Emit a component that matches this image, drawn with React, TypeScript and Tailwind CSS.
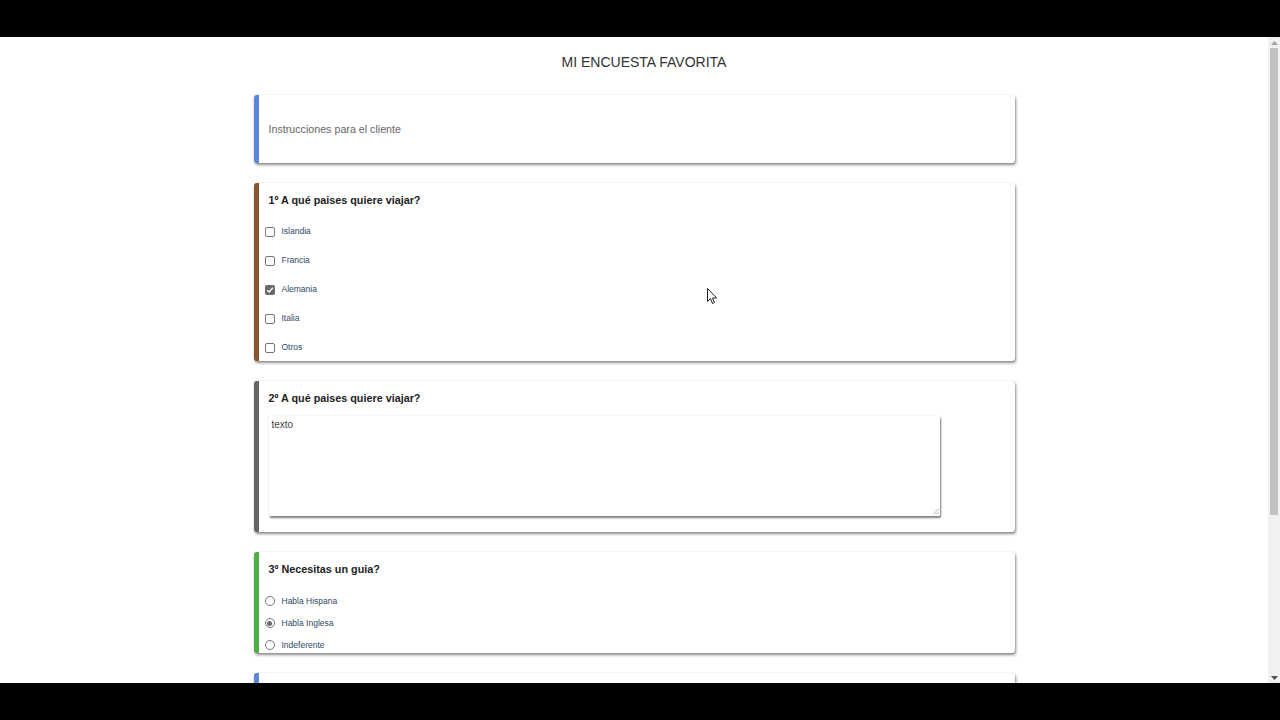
import React from "react";

type Option = { label: string; checked?: boolean };

const paises: Option[] = [
  { label: "Islandia" },
  { label: "Francia" },
  { label: "Alemania", checked: true },
  { label: "Italia" },
  { label: "Otros" },
];

const guias: Option[] = [
  { label: "Habla Hispana" },
  { label: "Habla Inglesa", checked: true },
  { label: "Indeferente" },
];

const Card = ({ color, className, children }: { color: string; className?: string; children?: React.ReactNode }) => (
  <section
    className={`w-[761px] rounded-[3px] border-l-[5px] bg-white shadow-[0_0_1px_rgba(0,0,0,0.25),1px_2px_3px_rgba(0,0,0,0.45)] ${color} ${className ?? ""}`}
  >
    {children}
  </section>
);

const Title = ({ children }: { children: React.ReactNode }) => (
  <h2 className="px-[10px] text-[10.8px] font-bold leading-[14px] text-[#222]">{children}</h2>
);

const CheckBox = ({ checked }: { checked?: boolean }) =>
  checked ? (
    <span className="flex h-[10px] w-[10px] items-center justify-center rounded-[2px] bg-[#6b6b6b]">
      <svg width="8" height="8" viewBox="0 0 8 8">
        <path d="M1.2 4.2 3.1 6 6.8 1.8" fill="none" stroke="#fff" strokeWidth="1.4" />
      </svg>
    </span>
  ) : (
    <span className="h-[10px] w-[10px] rounded-[2px] border border-[#767676] bg-white" />
  );

const Radio = ({ checked }: { checked?: boolean }) => (
  <span className="flex h-[10px] w-[10px] items-center justify-center rounded-full border border-[#767676] bg-white">
    {checked && <span className="h-[5px] w-[5px] rounded-full bg-[#6b6b6b]" />}
  </span>
);

const Scrollbar = () => (
  <div className="flex w-[12px] flex-col items-center bg-[#f1f1f1]">
    <div className="flex h-[11px] items-center justify-center">
      <svg width="7" height="4" viewBox="0 0 7 4">
        <path d="M0 4 3.5 0 7 4Z" fill="#a3a3a3" />
      </svg>
    </div>
    <div className="h-[467px] w-[8px] bg-[#c1c1c1]" />
    <div className="flex-1" />
    <div className="flex h-[11px] items-center justify-center">
      <svg width="7" height="4" viewBox="0 0 7 4">
        <path d="M0 0 3.5 4 7 0Z" fill="#505050" />
      </svg>
    </div>
  </div>
);

export default function App() {
  return (
    <div className="flex h-[720px] w-[1280px] flex-col overflow-hidden bg-black font-['Liberation_Sans',Arial,sans-serif]">
      <div className="h-[37px]" />
      <div className="relative flex h-[646px] bg-white">
        <main className="flex flex-1 flex-col items-center overflow-hidden">
          <h1 className="mt-[17px] pl-[20px] text-[14px] leading-[16px] text-[#333]">MI ENCUESTA FAVORITA</h1>

          <div className="mt-[25px] flex flex-col gap-[20px]">
            <Card color="border-[#5b86dc]" className="flex h-[68px] items-center">
              <p className="px-[10px] text-[10.7px] text-[#666]">Instrucciones para el cliente</p>
            </Card>

            <Card color="border-[#8a5533]" className="h-[178px] pt-[10px]">
              <Title>1º A qué paises quiere viajar?</Title>
              <ul className="mt-[10px] flex flex-col">
                {paises.map((p) => (
                  <li key={p.label} className="flex h-[29px] items-center gap-[7px] pl-[6px]">
                    <CheckBox checked={p.checked} />
                    <span className="text-[8.5px] text-[#2d4a64]">{p.label}</span>
                  </li>
                ))}
              </ul>
            </Card>

            <Card color="border-[#666]" className="h-[151px] pt-[10px]">
              <Title>2º A qué paises quiere viajar?</Title>
              <div className="relative ml-[10px] mt-[11px] h-[100px] w-[671px] rounded-[1px] bg-white px-[3px] pt-[3px] text-[10px] leading-[12px] text-[#444] shadow-[0_0_1px_rgba(0,0,0,0.3),1px_2px_2px_rgba(0,0,0,0.5)]">
                texto
                <svg className="absolute bottom-[1px] right-[1px]" width="7" height="7" viewBox="0 0 7 7">
                  <path d="M6.5 1 1 6.5M6.5 4 4 6.5" stroke="#999" strokeWidth="0.8" />
                </svg>
              </div>
            </Card>

            <Card color="border-[#4fae45]" className="h-[101px] pt-[10px]">
              <Title>3º Necesitas un guia?</Title>
              <ul className="mt-[14px] flex flex-col">
                {guias.map((g) => (
                  <li key={g.label} className="flex h-[22px] items-center gap-[7px] pl-[6px]">
                    <Radio checked={g.checked} />
                    <span className="text-[8.5px] text-[#2d4a64]">{g.label}</span>
                  </li>
                ))}
              </ul>
            </Card>

            <Card color="border-[#5b86dc]" className="h-[60px]" />
          </div>
        </main>
        <Scrollbar />

        <svg className="absolute left-[707px] top-[251px]" width="11" height="17" viewBox="0 0 11 17">
          <path d="M0.5 0.5v13l3-3 2 5 2-1-2-4.5h4.2Z" fill="#fff" stroke="#222" strokeWidth="1" />
        </svg>
      </div>
      <div className="h-[37px]" />
    </div>
  );
}
